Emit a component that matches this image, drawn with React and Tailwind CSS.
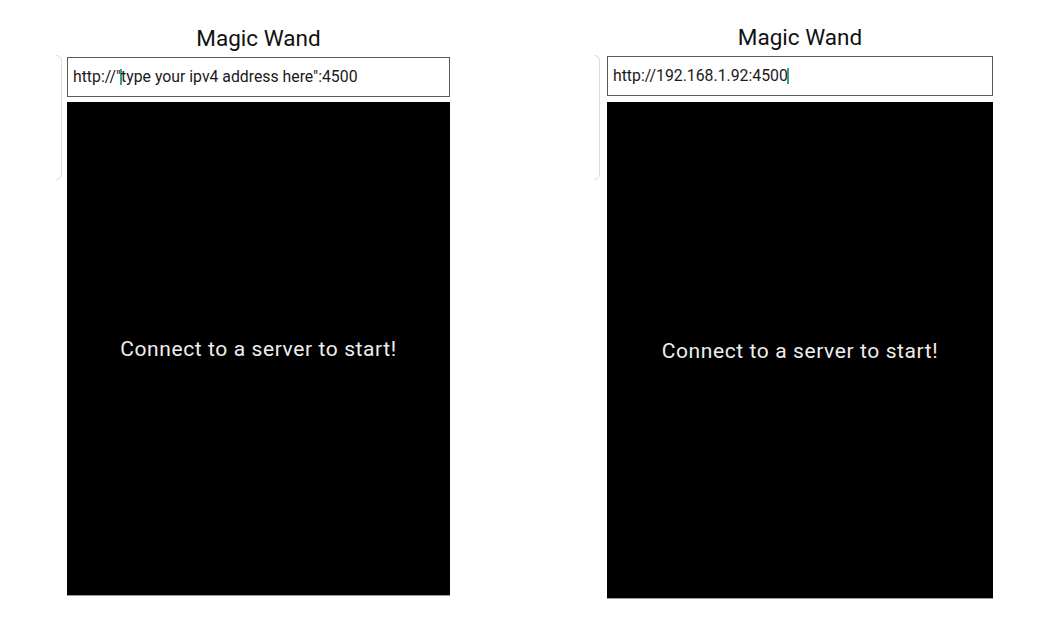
const Cursor = () => (
  <span className="inline-block w-[2px] h-[16px] mx-[-1px] bg-[#3f9a90] align-[-3px]" />
);

const Panel = ({ top, width, height, gap, bracketGap, children }) => (
  <div className="flex items-start">
    {/* drawer edge peeking in from the left */}
    <div
      className={`mt-[55px] h-[125px] w-[6px] rounded-r-[6px] border-y border-r border-[#dcdcdc] ${bracketGap}`}
    />
    <div className={`flex flex-col ${top} ${width}`}>
      <div className="h-[28px] mb-[5px] text-center text-[22.5px] leading-[28px] text-[#111]">
        Magic Wand
      </div>
      <div className="h-[40px] flex items-center border border-[#5a5a5a] pl-[5px] text-[15.8px] text-[#1a1a1a] whitespace-nowrap">
        {children}
      </div>
      <div
        className={`${gap} ${height} bg-black border-b border-[#9a9a9a] flex items-center justify-center pt-[3px]`}
      >
        <span className="text-[21px] tracking-[0.6px] text-[#eeeeee]">
          Connect to a server to start!
        </span>
      </div>
    </div>
  </div>
);

export default function App() {
  return (
    <div
      className="w-[1044px] h-[636px] bg-white flex overflow-hidden"
      style={{ fontFamily: 'Roboto, "Noto Sans", sans-serif' }}
    >
      <div className="ml-[56px]">
        <Panel
          top="pt-[24px]"
          width="w-[383px]"
          height="h-[494px]"
          gap="mt-[5px]"
          bracketGap="mr-[5px]"
        >
          <span>http://"</span>
          <Cursor />
          <span>type your ipv4 address here":4500</span>
        </Panel>
      </div>
      <div className="ml-[144px]">
        <Panel
          top="pt-[23px]"
          width="w-[386px]"
          height="h-[497px]"
          gap="mt-[6px]"
          bracketGap="mr-[7px]"
        >
          <span>http://192.168.1.92:4500</span>
          <Cursor />
        </Panel>
      </div>
    </div>
  );
}
